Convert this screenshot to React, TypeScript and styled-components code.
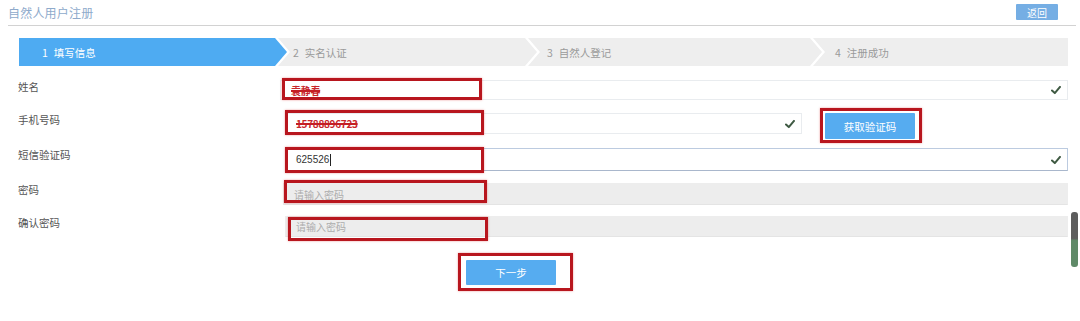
import React from "react";
import styled, { createGlobalStyle } from "styled-components";

const Global = createGlobalStyle`
  html, body { margin: 0; padding: 0; background: #fff; }
  body {
    width: 1080px; height: 321px; overflow: hidden;
    font-family: "Noto Sans CJK SC", "Noto Sans", sans-serif;
  }
`;

const Page = styled.div`
  position: relative;
  width: 1080px;
  height: 321px;
`;

const Header = styled.div`
  margin: 0 4px 0 8px;
  height: 25px;
  border-bottom: 1px solid #d2d2d2;
  display: flex;
  align-items: center;
  justify-content: space-between;
`;

const Title = styled.div`
  font-size: 12px;
  color: #8eaacb;
  letter-spacing: 0.2px;
`;

const BackButton = styled.button`
  margin-right: 18px;
  margin-top: -1px;
  width: 42px;
  height: 16px;
  border: none;
  border-radius: 1px;
  background: #75aee4;
  color: #fff;
  font: 10px "Noto Sans CJK SC", sans-serif;
  padding: 0;
`;

const Steps = styled.div`
  display: flex;
  margin-top: 12px;
  padding-left: 19px;
  height: 28px;
`;

const Step = styled.div<{ $w: number; $first?: boolean; $last?: boolean; $active?: boolean; $pad: number }>`
  width: ${(p) => p.$w}px;
  height: 28px;
  margin-left: ${(p) => (p.$first ? 0 : -9)}px;
  background: ${(p) => (p.$active ? "#4eabf2" : "#eeeeee")};
  color: ${(p) => (p.$active ? "#fff" : "#9a9a9a")};
  font-size: 10.5px;
  display: flex;
  align-items: center;
  padding-left: ${(p) => p.$pad}px;
  box-sizing: border-box;
  clip-path: polygon(
    0 0,
    ${(p) => (p.$last ? "100% 0, 100% 100%" : "calc(100% - 12px) 0, 100% 50%, calc(100% - 12px) 100%")},
    0 100%
    ${(p) => (p.$first ? "" : ", 12px 50%")}
  );
  & > span { margin-right: 6px; }
`;

const Form = styled.div`
  margin-top: 14px;
  padding-left: 18px;
  display: flex;
  flex-direction: column;
`;

const Row = styled.div<{ $h: number }>`
  display: flex;
  align-items: flex-start;
  height: ${(p) => p.$h}px;
`;

const Label = styled.div`
  width: 262px;
  flex: none;
  font-size: 10.5px;
  line-height: 14px;
  color: #555;
`;

const Field = styled.div<{ $x: number; $w: number; $h: number; $kind: "plain" | "focus" | "disabled" }>`
  position: relative;
  margin-left: ${(p) => p.$x}px;
  width: ${(p) => p.$w}px;
  height: ${(p) => p.$h}px;
  box-sizing: border-box;
  display: flex;
  align-items: center;
  padding-left: 10px;
  font-size: 10px;
  background: ${(p) => (p.$kind === "disabled" ? "#ededed" : "#fff")};
  border: 1px solid
    ${(p) => (p.$kind === "focus" ? "#bccbe0" : p.$kind === "plain" ? "#e9ecef" : "#ededed")};
  border-bottom-color: ${(p) => (p.$kind === "focus" ? "#a9b7cc" : p.$kind === "plain" ? "#e9ecef" : "#e4e4e4")};
`;

const Struck = styled.span`
  color: #c8262b;
  font-weight: bold;
  text-decoration: line-through;
  text-decoration-thickness: 2px;
  text-decoration-color: #c41e24;
  font-size: 10px;
  letter-spacing: -0.3px;
`;

const Value = styled.span`
  color: #333;
  font-family: "Liberation Sans", sans-serif;
  font-size: 10px;
`;

const Caret = styled.span`
  display: inline-block;
  width: 1px;
  height: 12px;
  background: #222;
  margin-left: 1px;
  vertical-align: middle;
`;

const Placeholder = styled.span`
  color: #acacac;
  font-size: 10px;
`;

const Check = styled.svg`
  position: absolute;
  right: 6px;
  top: 50%;
  transform: translateY(-50%);
`;

const Mark = styled.div<{ $l: number; $t: number; $w: number; $h: number }>`
  position: absolute;
  left: ${(p) => p.$l}px;
  top: ${(p) => p.$t}px;
  width: ${(p) => p.$w}px;
  height: ${(p) => p.$h}px;
  border: 3px solid #b8161e;
  box-sizing: border-box;
  box-shadow: 0 0 2px rgba(220, 60, 60, 0.5);
  pointer-events: none;
`;

const ButtonWrap = styled.div<{ $x: number }>`
  position: relative;
  margin-left: ${(p) => p.$x}px;
`;

const BlueButton = styled.button<{ $w: number; $h: number }>`
  width: ${(p) => p.$w}px;
  height: ${(p) => p.$h}px;
  border: none;
  border-radius: 1px;
  background: #56acf0;
  color: #fff;
  font: 10.5px "Noto Sans CJK SC", sans-serif;
  padding: 0;
  display: block;
`;

const ScrollThumb = styled.div`
  position: absolute;
  left: 1071px;
  top: 212px;
  width: 7px;
  height: 55px;
  border-radius: 3px;
  background: linear-gradient(
    to bottom,
    #5d5d5d 0%,
    #5d5d5d 48%,
    #5f8a68 52%,
    #5f8a68 100%
  );
`;

const CheckIcon = () => (
  <Check width="10" height="9" viewBox="0 0 10 9">
    <path d="M1 5 L3.8 7.6 L9 1.4" fill="none" stroke="#3f5a43" strokeWidth="2" strokeLinecap="round" strokeLinejoin="round" />
  </Check>
);

export default function App() {
  return (
    <Page>
      <Global />
      <Header>
        <Title>自然人用户注册</Title>
        <BackButton>返回</BackButton>
      </Header>
      <Steps>
        <Step $w={268} $first $active $pad={23}>
          <span>1</span>填写信息
        </Step>
        <Step $w={259} $pad={15}>
          <span>2</span>实名认证
        </Step>
        <Step $w={294} $pad={19}>
          <span>3</span>自然人登记
        </Step>
        <Step $w={255} $last $pad={22}>
          <span>4</span>注册成功
        </Step>
      </Steps>
      <Form>
        <Row $h={33}>
          <Label>姓名</Label>
          <Field $x={0} $w={788} $h={20} $kind="plain">
            <Struck>袁静春</Struck>
            <CheckIcon />
            <Mark $l={1} $t={-3} $w={200} $h={22} />
          </Field>
        </Row>
        <Row $h={35}>
          <Label>手机号码</Label>
          <Field $x={5} $w={517} $h={21} $kind="plain">
            <Struck>15788896723</Struck>
            <CheckIcon />
            <Mark $l={-1} $t={-4} $w={199} $h={25} />
          </Field>
          <ButtonWrap $x={23}>
            <BlueButton $w={90} $h={26}>获取验证码</BlueButton>
            <Mark $l={-5} $t={-5} $w={102} $h={35} />
          </ButtonWrap>
        </Row>
        <Row $h={35}>
          <Label>短信验证码</Label>
          <Field $x={5} $w={783} $h={23} $kind="focus">
            <Value>625526</Value>
            <Caret />
            <CheckIcon />
            <Mark $l={-1} $t={-2} $w={199} $h={26} />
          </Field>
        </Row>
        <Row $h={33}>
          <Label>密码</Label>
          <Field $x={3} $w={785} $h={22} $kind="disabled">
            <Placeholder>请输入密码</Placeholder>
            <Mark $l={0} $t={-4} $w={203} $h={23} />
          </Field>
        </Row>
        <Row $h={44}>
          <Label>确认密码</Label>
          <Field $x={5} $w={783} $h={21} $kind="disabled">
            <Placeholder>请输入密码</Placeholder>
            <Mark $l={2} $t={0} $w={200} $h={24} />
          </Field>
        </Row>
        <Row $h={30}>
          <ButtonWrap $x={448}>
            <BlueButton $w={90} $h={25}>下一步</BlueButton>
            <Mark $l={-8} $t={-7} $w={115} $h={38} />
          </ButtonWrap>
        </Row>
      </Form>
      <ScrollThumb />
    </Page>
  );
}
